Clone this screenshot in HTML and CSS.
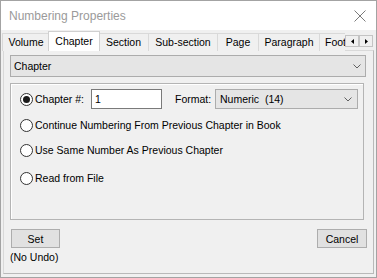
FILE: index.html
```html
<!DOCTYPE html>
<html>
<head>
<meta charset="utf-8">
<link rel="stylesheet" href="styles.css">
</head>
<body>
<div class="window">
  <div class="titlebar">
    <span class="title">Numbering Properties</span>
    <svg class="close" width="12" height="12" viewBox="0 0 12 12"><path d="M0.5 0.5 L11.5 11.5 M11.5 0.5 L0.5 11.5" stroke="#7a7a7a" stroke-width="1" fill="none"/></svg>
  </div>
  <div class="client">
    <div class="tabstrip">
      <div class="tabs">
        <div class="tab tab-volume">Volume</div>
        <div class="tab tab-chapter active">Chapter</div>
        <div class="tab tab-section">Section</div>
        <div class="tab tab-subsection">Sub-section</div>
        <div class="tab tab-page">Page</div>
        <div class="tab tab-paragraph">Paragraph</div>
        <div class="tab tab-footnote">Footnote</div>
      </div>
      <div class="scroller">
        <div class="sbtn"><svg width="3" height="5" viewBox="0 0 3 5"><path d="M3 0 L0 2.5 L3 5 Z" fill="#000"/></svg></div>
        <div class="sbtn"><svg width="3" height="5" viewBox="0 0 3 5"><path d="M0 0 L3 2.5 L0 5 Z" fill="#000"/></svg></div>
      </div>
    </div>
    <div class="panel">
      <div class="combo main-combo">
        <span>Chapter</span>
        <svg class="chev" width="8" height="5" viewBox="0 0 8 5"><path d="M0.5 0.5 L4 4 L7.5 0.5" stroke="#606060" fill="none"/></svg>
      </div>
      <div class="group">
        <div class="row row1">
          <div class="radio-label"><span class="radio checked"></span>Chapter #:</div>
          <div class="input">1</div>
          <span class="fmt-label">Format:</span>
          <div class="combo fmt-combo">
            <span>Numeric&nbsp; (14)</span>
            <svg class="chev" width="8" height="5" viewBox="0 0 8 5"><path d="M0.5 0.5 L4 4 L7.5 0.5" stroke="#606060" fill="none"/></svg>
          </div>
        </div>
        <div class="row row2"><div class="radio-label"><span class="radio"></span>Continue Numbering From Previous Chapter in Book</div></div>
        <div class="row row3"><div class="radio-label"><span class="radio"></span>Use Same Number As Previous Chapter</div></div>
        <div class="row row4"><div class="radio-label"><span class="radio"></span>Read from File</div></div>
      </div>
      <div class="actions">
        <div class="left-action">
          <div class="btn set-btn">Set</div>
          <div class="note">(No Undo)</div>
        </div>
        <div class="btn cancel-btn">Cancel</div>
      </div>
    </div>
  </div>
</div>
</body>
</html>
```

FILE: styles.css
```css
* { box-sizing: border-box; }
html, body { margin: 0; padding: 0; }
body {
  width: 377px;
  height: 278px;
  overflow: hidden;
  font-family: "Liberation Sans", Arial, sans-serif;
  font-size: 10.5px;
  color: #000;
  background: #f0f0f0;
}
.window {
  width: 377px;
  height: 278px;
  border: 1px solid #a3a3a3;
  background: #f0f0f0;
  display: flex;
  flex-direction: column;
}
.titlebar {
  height: 29px;
  background: #fff;
  display: flex;
  align-items: center;
  justify-content: space-between;
  padding: 0 10px 0 8px;
  flex-shrink: 0;
}
.title {
  font-size: 12px;
  color: #9a9a9a;
  margin-top: 1px;
}
.close { display: block; margin-top: 1px; }
.client {
  flex: 1;
  display: flex;
  flex-direction: column;
  padding: 0 2px 3px 1px;
}
.tabstrip {
  height: 21px;
  display: flex;
  position: relative;
  z-index: 2;
}
.tabs {
  width: 343px;
  display: flex;
  overflow: hidden;
  padding-left: 1px;
}
.tab {
  flex-shrink: 0;
  height: 18px;
  margin-top: 3px;
  margin-left: -1px;
  border: 1px solid #d9d9d9;
  border-bottom: none;
  background: #f0f0f0;
  line-height: 17px;
  text-align: center;
  white-space: nowrap;
}
.tab-volume { width: 48px; }
.tab-chapter { width: 52px; }
.tab-section { width: 51px; }
.tab-subsection { width: 70px; }
.tab-page { width: 42px; }
.tab-paragraph { width: 62px; }
.tab-footnote { width: 58px; text-align: left; padding-left: 5px; }
.tab.active {
  height: 21px;
  margin-top: 1px;
  margin-left: -2px;
  margin-right: -1px;
  background: #fff;
  position: relative;
  z-index: 2;
  line-height: 18px;
  border-color: #d0d0d0;
}
.scroller {
  display: flex;
  margin-top: 5px;
  height: 12px;
}
.sbtn {
  width: 14px;
  height: 12px;
  border: 1px solid #c4c4c4;
  background: #f0f0f0;
  display: flex;
  align-items: center;
  justify-content: center;
}
.sbtn svg { display: block; }
.panel {
  flex: 1;
  margin-left: 1px;
  margin-top: -1px;
  border: 1px solid #b9b9b9;
  border-top-color: #d9d9d9;
  border-left-color: #d9d9d9;
  background: #f0f0f0;
  padding: 4px 7px 0 6px;
  display: flex;
  flex-direction: column;
}
.combo {
  height: 22px;
  background: #e5e5e5;
  border: 1px solid #acacac;
  display: flex;
  align-items: center;
  justify-content: space-between;
  padding: 0 4px 0 4px;
}
.combo .chev { display: block; }
.main-combo { width: 356px; padding-left: 3px; }
.group {
  margin-top: 6px;
  width: 354px;
  height: 137px;
  border: 1px solid #b4b4b4;
  box-shadow: inset 1px 1px 0 #fff;
  padding: 5px 0 0 9px;
  display: flex;
  flex-direction: column;
}
.row {
  display: flex;
  align-items: center;
  height: 20px;
}
.row2 { margin-top: 6px; }
.row3 { margin-top: 5px; }
.row4 { margin-top: 8px; }
.radio-label {
  display: flex;
  align-items: center;
  white-space: nowrap;
}
.row1 .radio-label { width: 71px; }
.radio {
  width: 13px;
  height: 13px;
  border: 1px solid #333;
  border-radius: 50%;
  background: #fff;
  margin-right: 2px;
  display: flex;
  align-items: center;
  justify-content: center;
  flex-shrink: 0;
}
.radio.checked::after {
  content: "";
  width: 7px;
  height: 7px;
  border-radius: 50%;
  background: #1a1a1a;
}
.input {
  width: 71px;
  height: 20px;
  border: 1px solid #7a7a7a;
  background: #fff;
  padding-left: 3px;
  line-height: 18px;
}
.fmt-label { margin-left: 13px; width: 40px; }
.fmt-combo {
  width: 143px;
  height: 20px;
  padding: 0 5px 0 4px;
}
.actions {
  margin-top: 9px;
  display: flex;
  justify-content: space-between;
  align-items: flex-start;
  padding-left: 1px;
}
.btn {
  height: 19px;
  background: #e1e1e1;
  border: 1px solid #adadad;
  display: flex;
  align-items: center;
  justify-content: center;
}
.set-btn { width: 49px; }
.cancel-btn { width: 50px; margin-right: -1px; }
.note { margin-top: 3px; margin-left: -1px; }
```
